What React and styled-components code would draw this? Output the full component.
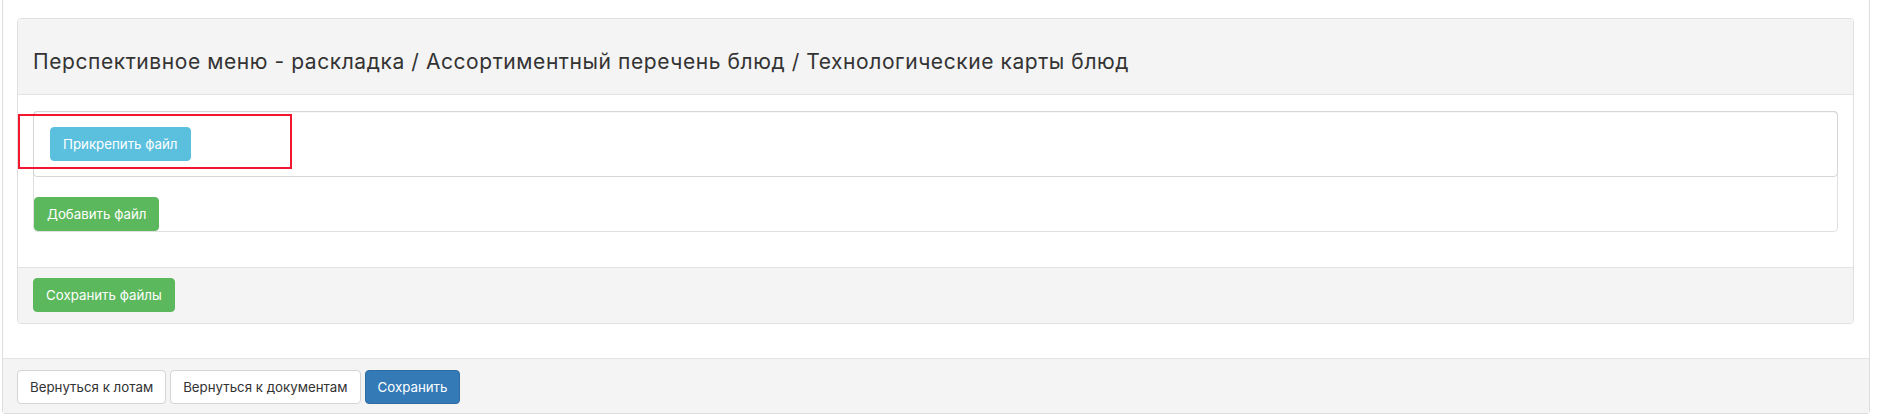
import React from 'react';
import styled, { createGlobalStyle } from 'styled-components';

const GlobalStyle = createGlobalStyle`
  body {
    margin: 0;
    background: #ffffff;
    font-family: Inter, "Noto Sans", sans-serif;
    color: #333333;
  }
`;

const Page = styled.div`
  width: 1868px;
  margin-left: 2px;
  box-sizing: border-box;
  border: 1px solid #dedede;
  border-top: none;
  border-radius: 0 0 4px 4px;
`;

const PageBody = styled.div`
  padding: 18px 15px 34px 14px;
`;

const Panel = styled.div`
  border: 1px solid #e0e0e0;
  border-radius: 4px;
  background: #ffffff;
  overflow: hidden;
`;

const PanelHeading = styled.div`
  height: 76px;
  box-sizing: border-box;
  display: flex;
  align-items: center;
  padding: 10px 15px 0 15px;
  background: #f4f4f4;
  border-bottom: 1px solid #e3e3e3;
`;

const PanelTitle = styled.h3`
  margin: 0;
  font-size: 21px;
  letter-spacing: 0.57px;
  font-weight: 400;
  color: #333333;
  white-space: nowrap;
`;

const PanelBody = styled.div`
  padding: 16px 15px 15px 15px;
`;

const FileList = styled.div`
  border: 1px solid #e0e0e0;
  border-radius: 4px;
  margin-bottom: 20px;
  display: flex;
  flex-direction: column;
  align-items: flex-start;
`;

const FileItem = styled.div`
  position: relative;
  align-self: stretch;
  padding: 15px 16px;
  border: 1px solid #d6d6d6;
  border-radius: 4px;
  margin: -1px -1px 0 -1px;
  box-shadow: inset 0 1px 1px rgba(0, 0, 0, 0.03);
`;

const Highlight = styled.div`
  position: absolute;
  left: -16px;
  top: 2px;
  width: 274px;
  height: 55px;
  box-sizing: border-box;
  border: 2px solid #f2172f;
  pointer-events: none;
`;

const PanelFooter = styled.div`
  padding: 10px 15px 11px 15px;
  background: #f4f4f4;
  border-top: 1px solid #e3e3e3;
`;

const PageFooter = styled.div`
  display: flex;
  gap: 4px;
  padding: 11px 15px 9px 14px;
  background: #f4f4f4;
  border-top: 1px solid #e3e3e3;
`;

const variants = {
  default: { bg: '#ffffff', border: '#d4d4d4', color: '#333333' },
  info: { bg: '#5bc0de', border: '#5bc0de', color: '#ffffff' },
  success: { bg: '#5cb85c', border: '#5cb85c', color: '#ffffff' },
  primary: { bg: '#337ab7', border: '#2e6da4', color: '#ffffff' },
};

const Button = styled.button`
  height: 34px;
  padding: 0 12px;
  font-family: Inter, "Noto Sans", sans-serif;
  font-size: 13.3px;
  line-height: 20px;
  border-radius: 4px;
  border: 1px solid ${p => variants[p.$variant].border};
  background: ${p => variants[p.$variant].bg};
  color: ${p => variants[p.$variant].color};
  cursor: pointer;
  white-space: nowrap;
`;

const AddButton = styled(Button)`
  margin-top: 20px;
  margin-left: 0;
`;

export default function App() {
  return (
    <>
      <GlobalStyle />
      <Page>
        <PageBody>
          <Panel>
            <PanelHeading>
              <PanelTitle>
                Перспективное меню - раскладка / Ассортиментный перечень блюд / Технологические карты блюд
              </PanelTitle>
            </PanelHeading>
            <PanelBody>
              <FileList>
                <FileItem>
                  <Button $variant="info">Прикрепить файл</Button>
                  <Highlight />
                </FileItem>
                <AddButton $variant="success">Добавить файл</AddButton>
              </FileList>
            </PanelBody>
            <PanelFooter>
              <Button $variant="success">Сохранить файлы</Button>
            </PanelFooter>
          </Panel>
        </PageBody>
        <PageFooter>
          <Button $variant="default">Вернуться к лотам</Button>
          <Button $variant="default">Вернуться к документам</Button>
          <Button $variant="primary">Сохранить</Button>
        </PageFooter>
      </Page>
    </>
  );
}
